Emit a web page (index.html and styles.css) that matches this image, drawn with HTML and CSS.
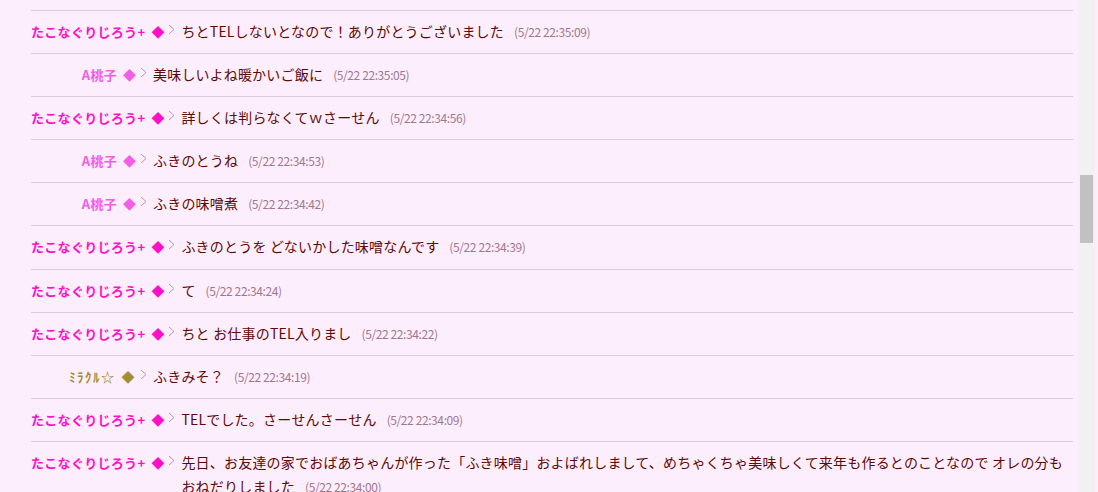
FILE: index.html
```html
<!DOCTYPE html>
<html lang="ja">

<head>
    <meta charset="UTF-8">
    <meta name="viewport" content="width=device-width, initial-scale=1.0">
    <title>チャットログ</title>
    <link rel="stylesheet" href="styles.css">
</head>

<body>
    <div class="frame">
        <div class="log-wrap">
            <div class="log">
                <div class="post">
                    <div class="who"><span class="name tako">たこなぐりじろう+</span><span class="mark tako">◆</span><svg class="arrow" width="7" height="11" viewBox="0 0 7 11"><polyline points="1,1 6,5.5 1,10" /></svg></div>
                    <div class="msg">ちとTELしないとなので！ありがとうございました<span class="time">(5/22 22:35:09)</span></div>
                </div>
                <div class="post">
                    <div class="who"><span class="name momo">A桃子</span><span class="mark momo">◆</span><svg class="arrow" width="7" height="11" viewBox="0 0 7 11"><polyline points="1,1 6,5.5 1,10" /></svg></div>
                    <div class="msg">美味しいよね暖かいご飯に<span class="time">(5/22 22:35:05)</span></div>
                </div>
                <div class="post">
                    <div class="who"><span class="name tako">たこなぐりじろう+</span><span class="mark tako">◆</span><svg class="arrow" width="7" height="11" viewBox="0 0 7 11"><polyline points="1,1 6,5.5 1,10" /></svg></div>
                    <div class="msg">詳しくは判らなくてｗさーせん<span class="time">(5/22 22:34:56)</span></div>
                </div>
                <div class="post">
                    <div class="who"><span class="name momo">A桃子</span><span class="mark momo">◆</span><svg class="arrow" width="7" height="11" viewBox="0 0 7 11"><polyline points="1,1 6,5.5 1,10" /></svg></div>
                    <div class="msg">ふきのとうね<span class="time">(5/22 22:34:53)</span></div>
                </div>
                <div class="post">
                    <div class="who"><span class="name momo">A桃子</span><span class="mark momo">◆</span><svg class="arrow" width="7" height="11" viewBox="0 0 7 11"><polyline points="1,1 6,5.5 1,10" /></svg></div>
                    <div class="msg">ふきの味噌煮<span class="time">(5/22 22:34:42)</span></div>
                </div>
                <div class="post">
                    <div class="who"><span class="name tako">たこなぐりじろう+</span><span class="mark tako">◆</span><svg class="arrow" width="7" height="11" viewBox="0 0 7 11"><polyline points="1,1 6,5.5 1,10" /></svg></div>
                    <div class="msg">ふきのとうを どないかした味噌なんです<span class="time">(5/22 22:34:39)</span></div>
                </div>
                <div class="post">
                    <div class="who"><span class="name tako">たこなぐりじろう+</span><span class="mark tako">◆</span><svg class="arrow" width="7" height="11" viewBox="0 0 7 11"><polyline points="1,1 6,5.5 1,10" /></svg></div>
                    <div class="msg">て<span class="time">(5/22 22:34:24)</span></div>
                </div>
                <div class="post">
                    <div class="who"><span class="name tako">たこなぐりじろう+</span><span class="mark tako">◆</span><svg class="arrow" width="7" height="11" viewBox="0 0 7 11"><polyline points="1,1 6,5.5 1,10" /></svg></div>
                    <div class="msg">ちと お仕事のTEL入りまし<span class="time">(5/22 22:34:22)</span></div>
                </div>
                <div class="post">
                    <div class="who"><span class="name miracle">ﾐﾗｸﾙ☆</span><span class="mark miracle">◆</span><svg class="arrow" width="7" height="11" viewBox="0 0 7 11"><polyline points="1,1 6,5.5 1,10" /></svg></div>
                    <div class="msg">ふきみそ？<span class="time">(5/22 22:34:19)</span></div>
                </div>
                <div class="post">
                    <div class="who"><span class="name tako">たこなぐりじろう+</span><span class="mark tako">◆</span><svg class="arrow" width="7" height="11" viewBox="0 0 7 11"><polyline points="1,1 6,5.5 1,10" /></svg></div>
                    <div class="msg">TELでした。さーせんさーせん<span class="time">(5/22 22:34:09)</span></div>
                </div>
                <div class="post">
                    <div class="who"><span class="name tako">たこなぐりじろう+</span><span class="mark tako">◆</span><svg class="arrow" width="7" height="11" viewBox="0 0 7 11"><polyline points="1,1 6,5.5 1,10" /></svg></div>
                    <div class="msg">先日、お友達の家でおばあちゃんが作った「ふき味噌」およばれしまして、めちゃくちゃ美味しくて来年も作るとのことなので オレの分もおねだりしました<span class="time">(5/22 22:34:00)</span></div>
                </div>
            </div>
        </div>
        <div class="scrollbar">
            <div class="thumb"></div>
        </div>
    </div>
</body>

</html>
```

FILE: styles.css
```css
/* chat log */
body {
    margin: 0;
    padding: 0;
    background-color: #fdeefd;
    font-family: "Noto Sans CJK JP", "DejaVu Sans", sans-serif;
    overflow: hidden;
}

.frame {
    display: flex;
    width: 1095px;
    height: 492px;
}

.log-wrap {
    flex: 1;
    padding: 0 5px 0 31px;
    overflow: hidden;
}

.log {
    margin-top: 10px;
    border-top: 1px solid #dccbdc;
}

.post {
    display: flex;
    align-items: flex-start;
    padding: 8px 0 10.1px;
    border-bottom: 1px solid #dccbdc;
}

.who {
    min-width: 116px;
    height: 24px;
    line-height: 23px;
    text-align: right;
    white-space: nowrap;
    flex-shrink: 0;
}

.name {
    font-size: 13px;
    font-weight: bold;
    letter-spacing: 0.3px;
    line-height: 1;
}

.mark {
    font-size: 13px;
    margin-left: 6px;
    line-height: 1;
}

.tako {
    color: #ff10c8;
}

.momo {
    color: #f25ee6;
}

.miracle {
    color: #a08e34;
    letter-spacing: 1.5px;
}

.arrow {
    margin-left: 4px;
    vertical-align: 2px;
}

.arrow polyline {
    fill: none;
    stroke: #ad9cad;
    stroke-width: 1;
}

.msg {
    flex: 1;
    margin-left: 6px;
    font-size: 14px;
    line-height: 24px;
    letter-spacing: 0.2px;
    color: #600808;
}

.time {
    margin-left: 10px;
    font-size: 12px;
    line-height: 1;
    letter-spacing: -0.4px;
    color: #9e788e;
}

.scrollbar {
    width: 17px;
    background-color: #f1f1f1;
    padding-top: 175px;
    box-sizing: border-box;
}

.thumb {
    width: 13px;
    height: 68px;
    margin-left: 2px;
    background-color: #c1c1c1;
}
```
